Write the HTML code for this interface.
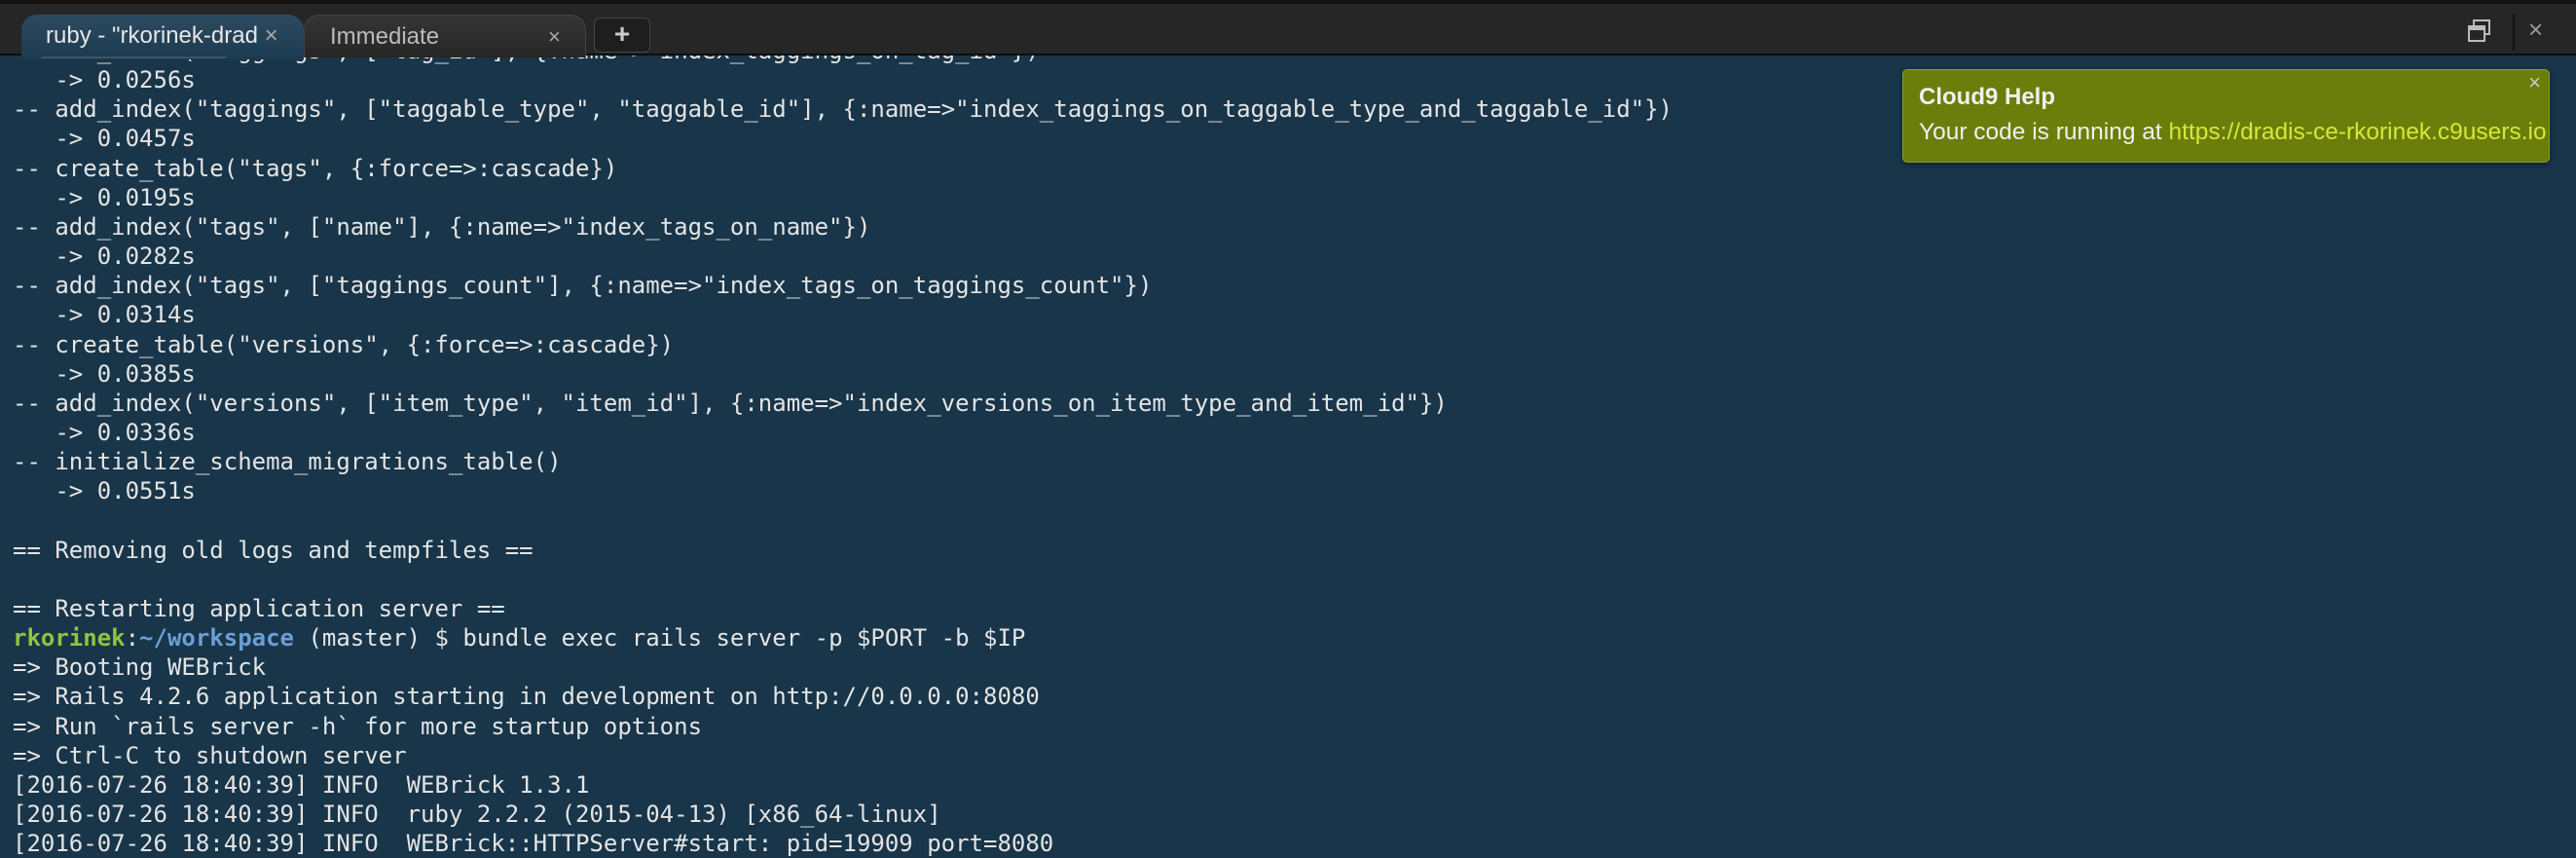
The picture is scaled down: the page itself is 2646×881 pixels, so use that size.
<!DOCTYPE html>
<html><head><meta charset="utf-8"><style>
html,body{margin:0;padding:0;width:2646px;height:880px;overflow:hidden;background:#183549;}
#bar{position:absolute;left:0;top:0;width:2646px;height:57px;background:#262626;border-top:4px solid #111;box-sizing:border-box;border-bottom:2px solid #0d0d0d;}
.tab{position:absolute;top:11px;height:44px;border-radius:16px 16px 0 0;font-family:"Liberation Sans",sans-serif;font-size:24px;line-height:44px;box-sizing:border-box;}
#t1{left:22px;width:290px;background:linear-gradient(#2d4a60,#1c3a50);color:#e6e6e6;padding-left:25px;z-index:2;height:46px;}
#t1:after{content:"";position:absolute;left:20px;right:80px;bottom:1px;height:2px;background:#3b5568;}
#t2{left:312px;width:290px;background:linear-gradient(#353535,#262626);color:#bbb;padding-left:26px;border:1px solid #444;border-bottom:none;}
.x{position:absolute;font-size:22px;color:#aaa;}
#plus{position:absolute;left:610px;top:14px;width:56px;height:34px;background:#1e1e1e;border:1px solid #444;border-radius:6px;color:#ccc;font:bold 28px/32px "Liberation Sans",sans-serif;text-align:center;}
#term{position:absolute;left:13px;top:37px;font-family:"DejaVu Sans Mono",monospace;font-size:24px;line-height:30.15px;color:#e4e4e4;white-space:pre;}
.g{color:#8cc63f;font-weight:bold}.b{color:#6b9fd6;font-weight:bold}
#help{position:absolute;left:1954px;top:71px;width:665px;height:96px;background:#6b7e0b;border:1px solid #8a9b30;border-radius:5px;box-sizing:border-box;font-family:"Liberation Sans",sans-serif;color:#f0f0f0;box-shadow:0 2px 6px rgba(0,0,0,.4);}
</style></head><body>
<div id="term">   add_index("taggings", ["tag_id"], {:name=>"index_taggings_on_tag_id"})
   -> 0.0256s
-- add_index("taggings", ["taggable_type", "taggable_id"], {:name=>"index_taggings_on_taggable_type_and_taggable_id"})
   -> 0.0457s
-- create_table("tags", {:force=>:cascade})
   -> 0.0195s
-- add_index("tags", ["name"], {:name=>"index_tags_on_name"})
   -> 0.0282s
-- add_index("tags", ["taggings_count"], {:name=>"index_tags_on_taggings_count"})
   -> 0.0314s
-- create_table("versions", {:force=>:cascade})
   -> 0.0385s
-- add_index("versions", ["item_type", "item_id"], {:name=>"index_versions_on_item_type_and_item_id"})
   -> 0.0336s
-- initialize_schema_migrations_table()
   -> 0.0551s

== Removing old logs and tempfiles ==

== Restarting application server ==
<span class="g">rkorinek</span>:<span class="b">~/workspace</span> (master) $ bundle exec rails server -p $PORT -b $IP
=> Booting WEBrick
=> Rails 4.2.6 application starting in development on http://0.0.0.0:8080
=> Run `rails server -h` for more startup options
=> Ctrl-C to shutdown server
[2016-07-26 18:40:39] INFO  WEBrick 1.3.1
[2016-07-26 18:40:39] INFO  ruby 2.2.2 (2015-04-13) [x86_64-linux]
[2016-07-26 18:40:39] INFO  WEBrick::HTTPServer#start: pid=19909 port=8080</div>
<div id="bar">
<div class="tab" id="t2">Immediate<span class="x" style="left:250px">×</span></div>
<div class="tab" id="t1">ruby - "rkorinek-drad <span style="color:#aaa">×</span></div>
<div id="plus">+</div>
<svg style="position:absolute;left:2535px;top:15px" width="24" height="26" viewBox="0 0 24 26"><rect x="6" y="2" width="16" height="14" fill="none" stroke="#bbb" stroke-width="2"/><rect x="1" y="8" width="16" height="15" fill="#262626" stroke="#bbb" stroke-width="2"/><rect x="1" y="8" width="16" height="4" fill="#bbb"/></svg>
<div style="position:absolute;left:2581px;top:10px;width:2px;height:38px;background:#111"></div>
<div style="position:absolute;left:2597px;top:11px;color:#999;font:26px 'Liberation Sans',sans-serif">×</div>
</div>
<div id="help">
<div style="position:absolute;right:8px;top:0px;font-size:22px;color:#ccc">×</div>
<div style="position:absolute;left:16px;top:14px;font-size:24px;font-weight:bold">Cloud9 Help</div>
<div style="position:absolute;left:16px;top:50px;font-size:24.5px;white-space:nowrap">Your code is running at <span style="color:#d4e83a">https://dradis-ce-rkorinek.c9users.io</span></div>
</div>
</body></html>
